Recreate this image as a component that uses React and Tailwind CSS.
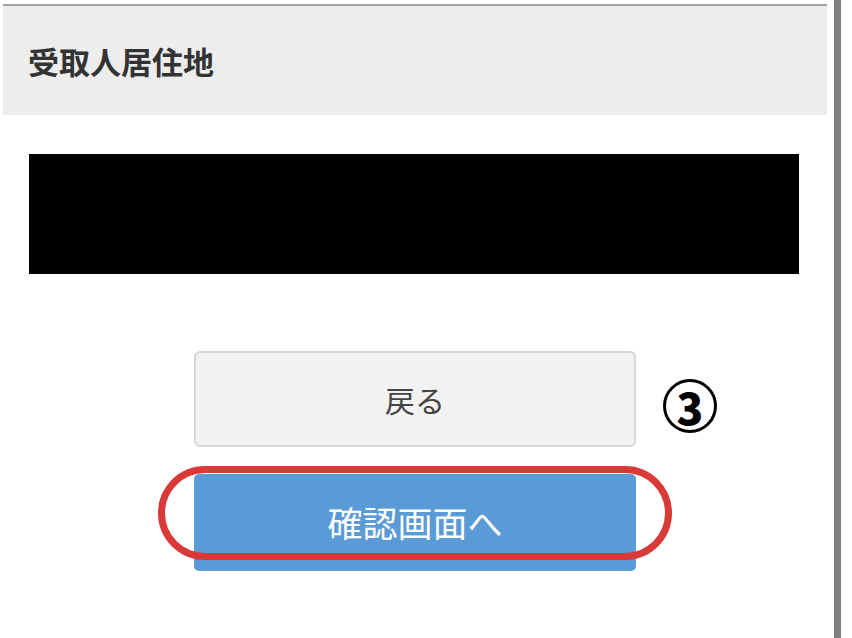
export default function App() {
  return (
    <div
      className="flex min-h-[638px] bg-white"
      style={{ fontFamily: '"Noto Sans CJK JP", "Noto Sans", sans-serif' }}
    >
      {/* main column */}
      <div className="ml-[3px] mt-[4px] w-[824px]">
        <div className="h-[2px] bg-[#a0a0a0]" />
        <div className="flex h-[109px] items-center bg-[#ededed] pl-[25px]">
          <h2 className="text-[31px] font-bold leading-none text-[#333]">受取人居住地</h2>
        </div>

        {/* redacted block */}
        <div className="ml-[26px] mt-[39px] h-[120px] w-[770px] bg-black" />

        {/* buttons */}
        <div className="relative mx-auto mt-[77px] w-[442px]">
          <button className="flex h-[96px] w-full items-center justify-center rounded-[6px] border-2 border-[#d6d6d6] bg-[#f2f2f2] text-[30px] text-[#444]">
            戻る
          </button>
          <button className="mt-[27px] flex h-[97px] w-full items-center justify-center rounded-[5px] bg-[#5a9ad6] text-[35px] text-white">
            確認画面へ
          </button>

          {/* annotation number */}
          <div className="absolute left-[469px] top-[28px] flex h-[54px] w-[54px] items-center justify-center rounded-full border-[3px] border-black">
            <span className="text-[44px] font-extrabold leading-none text-black">3</span>
          </div>

          {/* red highlight */}
          <div className="pointer-events-none absolute left-[-36px] top-[115px] h-[94px] w-[514px] rounded-full border-[7px] border-[#d93a37]" />
        </div>
      </div>

      {/* right edge bar */}
      <div className="ml-[7px] h-[638px] w-[7px] bg-[#808080]" />
    </div>
  );
}
